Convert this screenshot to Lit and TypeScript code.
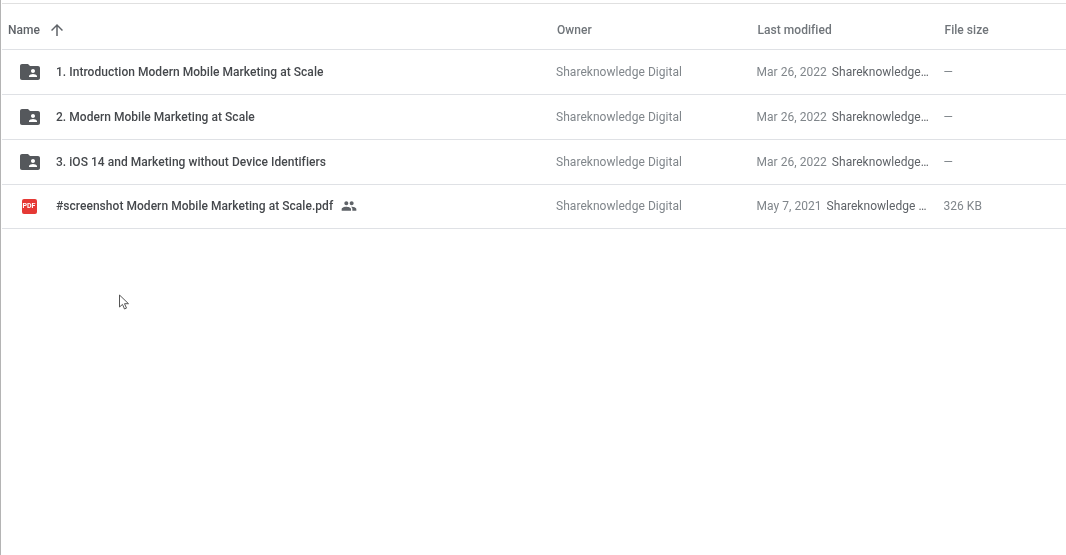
import { LitElement, html, css, svg } from "lit";
import { customElement } from "lit/decorators.js";

interface Row { name: string; kind: "folder" | "pdf"; shared?: boolean; date: string; by: string; size: string; }

const ROWS: Row[] = [
  { name: "1. Introduction Modern Mobile Marketing at Scale", kind: "folder", date: "Mar 26, 2022", by: "Shareknowledge Digital", size: "—" },
  { name: "2. Modern Mobile Marketing at Scale", kind: "folder", date: "Mar 26, 2022", by: "Shareknowledge Digital", size: "—" },
  { name: "3. iOS 14 and Marketing without Device Identifiers", kind: "folder", date: "Mar 26, 2022", by: "Shareknowledge Digital", size: "—" },
  { name: "#screenshot Modern Mobile Marketing at Scale.pdf", kind: "pdf", shared: true, date: "May 7, 2021", by: "Shareknowledge Digital", size: "326 KB" },
];

const folderIcon = svg`<path d="M20 6h-8l-2-2H4c-1.1 0-2 .9-2 2v12c0 1.1.9 2 2 2h16c1.1 0 2-.9 2-2V8c0-1.1-.9-2-2-2zm-5 3c1.1 0 2 .9 2 2s-.9 2-2 2-2-.9-2-2 .9-2 2-2zm4 8h-8v-1c0-1.33 2.67-2 4-2s4 .67 4 2v1z"/>`;
const peopleIcon = svg`<path d="M16 11c1.66 0 2.99-1.34 2.99-3S17.66 5 16 5c-1.66 0-3 1.34-3 3s1.34 3 3 3zm-8 0c1.66 0 2.99-1.34 2.99-3S9.66 5 8 5C6.34 5 5 6.34 5 8s1.34 3 3 3zm0 2c-2.33 0-7 1.17-7 3.5V19h14v-2.5c0-2.33-4.67-3.5-7-3.5zm8 0c-.29 0-.62.02-.97.05 1.16.84 1.97 1.97 1.97 3.45V19h6v-2.5c0-2.33-4.67-3.5-7-3.5z"/>`;
const arrowUp = svg`<path d="M4 12l1.41 1.41L11 7.83V20h2V7.83l5.58 5.59L20 12l-8-8-8 8z"/>`;

@customElement("app-root")
export class AppRoot extends LitElement {
  static styles = css`
    :host {
      display: block;
      position: relative;
      width: 1066px;
      height: 555px;
      box-sizing: border-box;
      background: #fff;
      border-left: 1px solid #b4b4b4;
      padding: 3px 0 0 1px;
      overflow: hidden;
      font-family: Roboto, "Liberation Sans", sans-serif;
      font-size: 12px;
      letter-spacing: 0.04px;
    }
    .table { border-top: 1px solid #e0e0e0; filter: blur(0.3px); }
    .row {
      display: grid;
      grid-template-columns: 554px 200.5px 187px 1fr;
      align-items: center;
      height: 43.85px;
      box-sizing: content-box;
      border-bottom: 1px solid #dfe1e5;
    }
    .head {
      height: 45px;
      box-sizing: border-box;
      border-bottom: 0;
      padding-top: 7px;
      color: #5f6368;
      font-weight: 500;
    }
    .rule { height: 1px; background: #dfe1e5; }
    .head > div { padding-left: 1px; }
    .head > .namehead {
      display: flex;
      align-items: center;
      padding-left: 6px;
      color: #5f6368;
      font-weight: 500;
    }
    .head .dim { color: #70757a; }
    .arrow { width: 18px; height: 18px; margin-left: 8px; fill: #5f6368; }
    .namecell { display: flex; align-items: center; min-width: 0; }
    .iconbox { width: 54px; display: flex; justify-content: center; box-sizing: border-box; }
    .folder { width: 24px; height: 24px; fill: #55585c; margin-left: 1px; }
    .pdf {
      width: 15px;
      height: 15px;
      border-radius: 2px;
      background: #e53935;
      color: #fff;
      font-size: 7px;
      font-weight: 700;
      line-height: 15px;
      text-align: center;
      letter-spacing: 0;
    }
    .name { color: #45484c; font-weight: 500; white-space: nowrap; }
    .people { width: 16px; height: 16px; margin-left: 8px; fill: #5f6368; }
    .owner { color: #80868b; white-space: nowrap; }
    .modified { display: flex; align-items: center; gap: 5px; min-width: 0; padding-right: 13px; color: #80868b; }
    .date { white-space: nowrap; flex: none; }
    .by { color: #5f6368; white-space: nowrap; overflow: hidden; text-overflow: ellipsis; min-width: 0; }
    .size { color: #80868b; white-space: nowrap; }
    .cursor { position: absolute; left: 117px; top: 294px; width: 13px; height: 17px; }
  `;

  render() {
    return html`
      <div class="table">
        <div class="row head">
          <div class="namehead">Name<svg class="arrow" viewBox="0 0 24 24">${arrowUp}</svg></div>
          <div class="dim">Owner</div>
          <div class="dim">Last modified</div>
          <div class="dim">File size</div>
        </div>
        <div class="rule"></div>
        ${ROWS.map((r) => html`
          <div class="row">
            <div class="namecell">
              <div class="iconbox">
                ${r.kind === "folder"
                  ? html`<svg class="folder" viewBox="0 0 24 24">${folderIcon}</svg>`
                  : html`<div class="pdf">PDF</div>`}
              </div>
              <span class="name">${r.name}</span>
              ${r.shared ? html`<svg class="people" viewBox="0 0 24 24">${peopleIcon}</svg>` : ""}
            </div>
            <div class="owner">Shareknowledge Digital</div>
            <div class="modified"><span class="date">${r.date}</span><span class="by">${r.by}</span></div>
            <div class="size">${r.size}</div>
          </div>`)}
      </div>
      <svg class="cursor" viewBox="0 0 13 17">
        <path d="M1.5 1v12l3-2.6 2 4.6 2-.9-2-4.4h4z" fill="#fff" stroke="#555" stroke-width="1"/>
      </svg>
    `;
  }
}
